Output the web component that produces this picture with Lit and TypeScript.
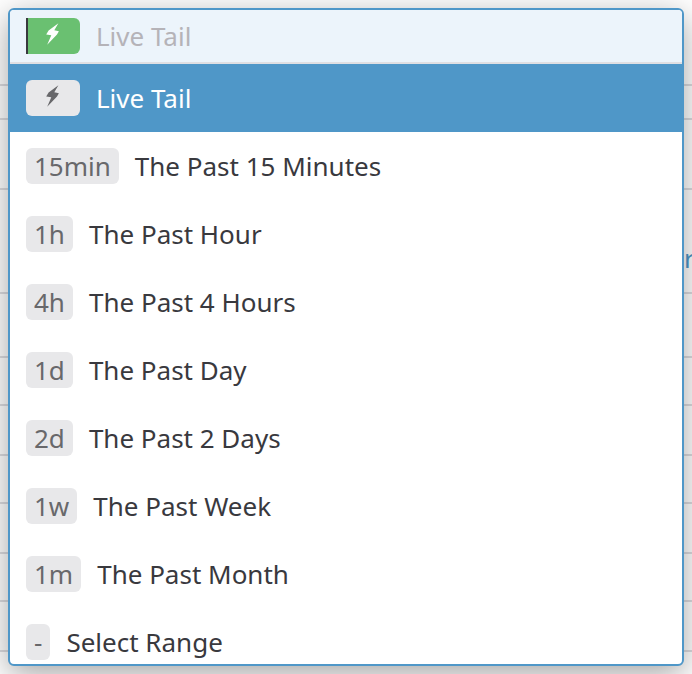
import { LitElement, html, css, svg } from "lit";
import { customElement, state } from "lit/decorators.js";
import { classMap } from "lit/directives/class-map.js";

interface Range {
  code: string;
  label: string;
}

const RANGES: Range[] = [
  { code: "", label: "Live Tail" },
  { code: "15min", label: "The Past 15 Minutes" },
  { code: "1h", label: "The Past Hour" },
  { code: "4h", label: "The Past 4 Hours" },
  { code: "1d", label: "The Past Day" },
  { code: "2d", label: "The Past 2 Days" },
  { code: "1w", label: "The Past Week" },
  { code: "1m", label: "The Past Month" },
  { code: "-", label: "Select Range" },
];

// Row heights of the page that shows on both sides of the menu.
const BACKDROP_ROWS = [86, 34, 70, 104, 64, 48, 50, 48, 50, 48, 50];
const LINK_ROW = 3;

const bolt = svg`<path d="M12.4 0.2 L2.6 7.6 L0.2 11.4 L5.3 12.2 L1.2 21.8 L11 11.6 L12.9 8.2 L8.3 7.3 Z" />`;

@customElement("app-root")
export class AppRoot extends LitElement {
  @state() private selected = 0;

  static styles = css`
    :host {
      display: grid;
      height: 100vh;
      overflow: hidden;
      background: #fff;
      color: #39393e;
      font: 26px/36px "Noto Sans", sans-serif;
    }
    * {
      box-sizing: border-box;
    }
    .backdrop,
    .stage {
      grid-area: 1 / 1;
      min-width: 0;
      min-height: 0;
    }
    .line {
      display: flex;
      align-items: center;
      justify-content: flex-end;
      border-bottom: 2px solid #dcdce0;
    }
    .more {
      width: 8px;
      overflow: hidden;
      padding-top: 34px;
      color: #4f97c8;
      text-decoration: none;
    }
    .stage {
      padding: 8px;
    }
    .picker {
      display: flex;
      flex-direction: column;
      max-height: calc(100vh - 16px);
      overflow: hidden;
      border: 2px solid #4f97c8;
      border-radius: 6px;
      background: #fff;
      box-shadow: 0 8px 32px rgba(0, 0, 0, 0.36);
    }
    .field {
      display: flex;
      flex: none;
      align-items: center;
      gap: 16px;
      height: 54px;
      padding: 0 16px;
      border-bottom: 2px solid #dfdfe3;
      background: #ecf4fb;
    }
    .query {
      flex: 1;
      min-width: 0;
      height: 36px;
      padding: 0;
      border: 0;
      outline: 0;
      background: none;
      color: inherit;
      font: inherit;
    }
    .query::placeholder {
      color: #b5b3b8;
      opacity: 1;
    }
    .menu {
      min-height: 0;
      overflow: hidden;
    }
    .option {
      display: flex;
      align-items: center;
      gap: 16px;
      width: 100%;
      height: 68px;
      padding: 0 16px;
      border: 0;
      background: none;
      color: inherit;
      font: inherit;
      text-align: left;
    }
    .option.active {
      background: #4f97c8;
      color: #fff;
    }
    .badge {
      display: flex;
      flex: none;
      justify-content: center;
      height: 36px;
      padding: 0 8px;
      border-radius: 6px;
      background: #e8e8ea;
      color: #68686b;
    }
    .badge.icon {
      justify-content: flex-start;
      width: 54px;
      padding: 5px 20px;
    }
    .badge.green {
      background: #6ac071;
      box-shadow: inset 2px 0 #39393e;
      border-radius: 0 6px 6px 0;
      color: #fff;
    }
    .bolt {
      flex: none;
      width: 13px;
      height: 22px;
      fill: currentColor;
    }
  `;

  private icon() {
    return html`<svg class="bolt" viewBox="0 0 13 22" aria-hidden="true">${bolt}</svg>`;
  }

  private option(range: Range, index: number) {
    const live = range.code === "";
    return html`<button
      class=${classMap({ option: true, active: index === this.selected })}
      role="option"
      aria-selected=${index === this.selected}
      @click=${() => (this.selected = index)}
    >
      <span class=${classMap({ badge: true, icon: live })}>${live ? this.icon() : range.code}</span>
      <span>${range.label}</span>
    </button>`;
  }

  render() {
    return html`
      <div class="backdrop">
        ${BACKDROP_ROWS.map(
          (height, i) => html`<div class="line" style="height: ${height}px">
            ${i === LINK_ROW ? html`<a class="more" href="#">r</a>` : ""}
          </div>`
        )}
      </div>
      <main class="stage">
        <div class="picker">
          <label class="field">
            <span class="badge icon green">${this.icon()}</span>
            <input class="query" type="text" placeholder="Live Tail" aria-label="Time range" />
          </label>
          <div class="menu" role="listbox" aria-label="Time ranges">
            ${RANGES.map((range, i) => this.option(range, i))}
          </div>
        </div>
      </main>
    `;
  }
}
